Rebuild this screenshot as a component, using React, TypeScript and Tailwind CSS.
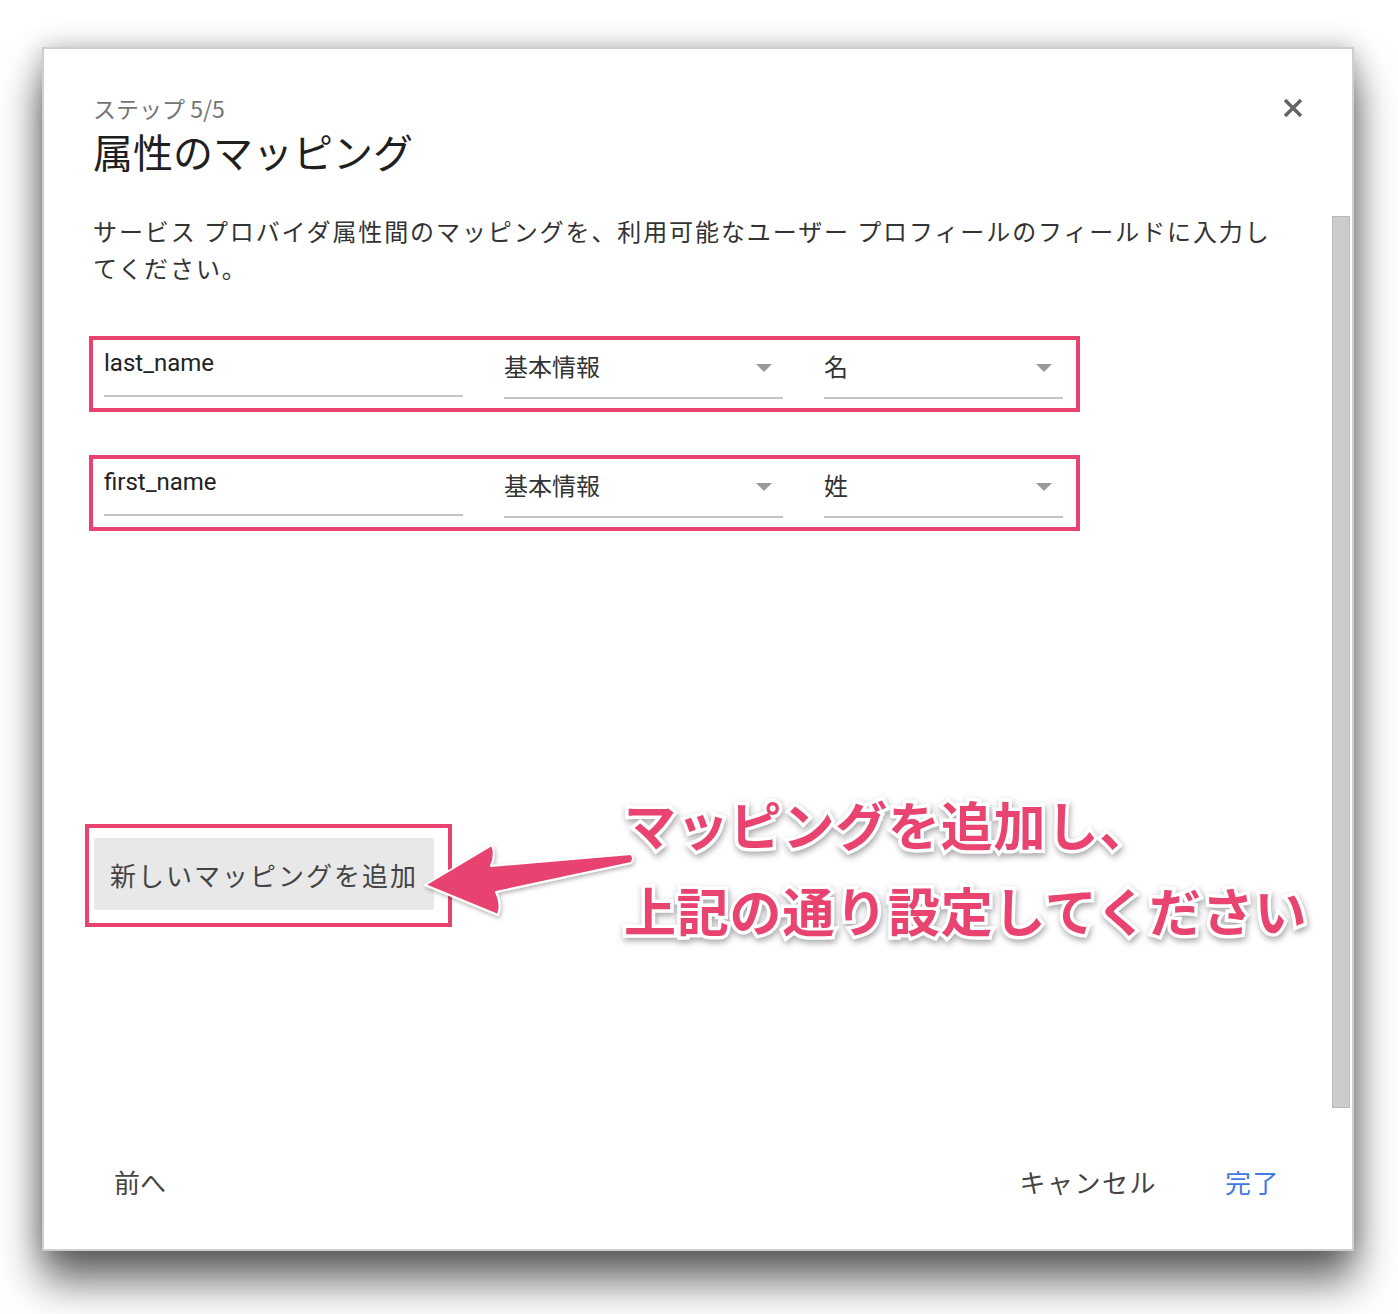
import React from "react";

const FONT = { fontFamily: '"Noto Sans CJK JP", "Noto Sans", sans-serif' };

function Caret() {
  return (
    <svg width="18" height="10" viewBox="0 0 18 10" className="shrink-0">
      <path d="M1 1 L17 1 L9 9 Z" fill="#9a9a9a" />
    </svg>
  );
}

function Row({ name, value }: { name: string; value: string }) {
  return (
    <div className="ml-[45px] flex h-[76px] w-[991px] items-start border-4 border-[#e8436f] pl-[11px] pr-[12px]">
      <div className="mt-[8px] flex h-[49px] w-[359px] flex-col justify-between border-b-2 border-[#c4c4c4]">
        <span className="text-[24px] leading-[30px] text-[#222]" style={{ fontFamily: 'Roboto, "Noto Sans CJK JP", sans-serif' }}>{name}</span>
      </div>
      <div className="ml-[41px] mt-[10px] flex h-[49px] w-[279px] items-start justify-between border-b-2 border-[#c4c4c4] pr-[10px]">
        <span className="text-[24px] leading-[32px] text-[#333]">基本情報</span>
        <span className="mt-[13px]"><Caret /></span>
      </div>
      <div className="ml-[41px] mt-[10px] flex h-[49px] w-[239px] items-start justify-between border-b-2 border-[#c4c4c4] pr-[10px]">
        <span className="text-[24px] leading-[32px] text-[#333]">{value}</span>
        <span className="mt-[13px]"><Caret /></span>
      </div>
    </div>
  );
}

export default function App() {
  return (
    <div className="h-[1314px] w-[1398px] overflow-hidden bg-white pl-[42px] pt-[47px]" style={FONT}>
      <div className="relative flex h-[1204px] w-[1312px] flex-col border-2 border-[#cfcfcf] bg-white shadow-[0_30px_40px_rgba(0,0,0,0.6),0_0_24px_rgba(0,0,0,0.25)]">
        {/* scrollbar */}
        <div className="absolute left-[1288px] top-[167px] h-[892px] w-[18px] border border-[#b9b9b9] bg-[#cccccc]" />

        <div className="flex items-start justify-between pl-[49px] pr-[48px] pt-[44px]">
          <div className="flex flex-col">
            <span className="text-[23px] leading-[30px] text-[#757575]">ステップ 5/5</span>
            <span className="mt-[4px] text-[40px] leading-[48px] text-[#1f1f1f]">属性のマッピング</span>
          </div>
          <svg width="22" height="22" viewBox="0 0 22 22" className="mt-[4px]">
            <path d="M3 3 L19 19 M19 3 L3 19" stroke="#646464" strokeWidth="3.5" />
          </svg>
        </div>

        <p className="ml-[49px] mt-[37px] w-[1230px] text-[24px] leading-[37px] tracking-[1.9px] text-[#333]">
          サービス プロバイダ属性間のマッピングを、利用可能なユーザー プロフィールのフィールドに入力し
          <br />
          てください。
        </p>

        <div className="mt-[50px]">
          <Row name="last_name" value="名" />
        </div>
        <div className="mt-[43px]">
          <Row name="first_name" value="姓" />
        </div>

        <div className="ml-[41px] mt-[293px] h-[103px] w-[367px] border-4 border-[#e8436f] pl-[5px] pt-[10px]">
          <div className="flex h-[72px] w-[340px] items-center justify-center rounded-[3px] bg-[#e8e8e8] text-[26px] tracking-[2px] text-[#444]">
            新しいマッピングを追加
          </div>
        </div>

        <div className="mt-auto flex items-center pb-[48px] pl-[70px] pr-[72px]">
          <span className="text-[26px] text-[#444]">前へ</span>
          <span className="ml-auto text-[26px] tracking-[1.5px] text-[#444]">キャンセル</span>
          <span className="ml-[68px] text-[26px] tracking-[1.5px] text-[#3f7be3]">完了</span>
        </div>

        {/* arrow */}
        <svg className="absolute left-[370px] top-[780px]" width="280" height="150" viewBox="370 780 280 150">
          <defs>
            <filter id="ds" x="-20%" y="-20%" width="140%" height="140%">
              <feDropShadow dx="1" dy="2" stdDeviation="2" floodColor="#000" floodOpacity="0.3" />
            </filter>
          </defs>
          <path
            d="M381 836 L448 796 Q452 806 447 817 L587 805 Q591 810 587 814 L452 843 Q458 855 454 866 Z"
            fill="#e8436f"
            stroke="#fff"
            strokeWidth="2"
            strokeLinejoin="round"
            filter="url(#ds)"
          />
        </svg>

        {/* annotation text */}
        <div
          className="absolute left-[580px] top-[732px] flex flex-col text-[52px] font-bold leading-[86px] tracking-[0.8px] text-[#e8446f] [paint-order:stroke_fill] [-webkit-text-stroke:7px_#ffffff] [filter:drop-shadow(1px_3px_3px_rgba(0,0,0,0.35))]"
        >
          <span>マッピングを追加し、</span>
          <span>上記の通り設定してください</span>
        </div>
      </div>
    </div>
  );
}
